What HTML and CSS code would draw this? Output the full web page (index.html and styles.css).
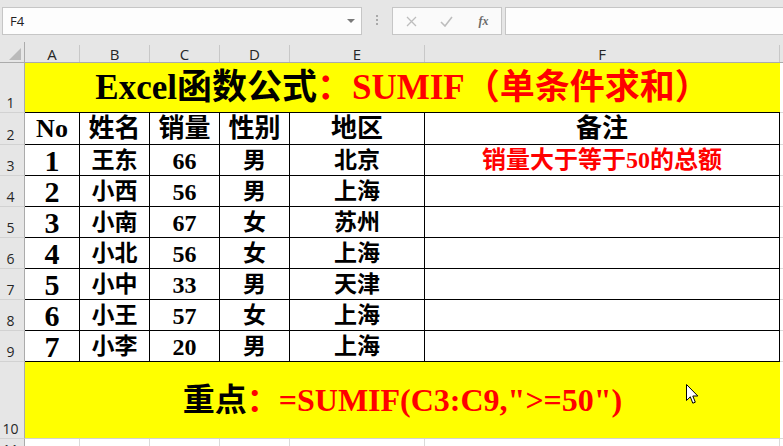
FILE: index.html
```html
<!DOCTYPE html>
<html lang="zh-CN">
<head>
<meta charset="utf-8">
<title>SUMIF</title>
<link rel="stylesheet" href="styles.css">
</head>
<body>
<div class="app">
  <div class="fbar">
    <div class="namebox"><span class="ref">F4</span><span class="caret"></span></div>
    <div class="grip"><i></i><i></i><i></i></div>
    <div class="fxbox">
      <span class="ico"><svg width="11" height="11" viewBox="0 0 11 11"><path d="M1 1 L10 10 M10 1 L1 10" stroke="#bdbdbd" stroke-width="1.3" fill="none"/></svg></span>
      <span class="ico"><svg width="13" height="11" viewBox="0 0 13 11"><path d="M1 6 L5 10 L12 1" stroke="#bdbdbd" stroke-width="1.6" fill="none"/></svg></span>
      <span class="ico fx">fx</span>
    </div>
    <div class="finput"></div>
  </div>

  <div class="sheet">
    <div class="row hdr">
      <div class="corner"><svg width="12" height="12" viewBox="0 0 12 12"><polygon points="12,0 12,12 0,12" fill="#bababa"/></svg></div>
      <div class="ch">A</div><div class="ch">B</div><div class="ch">C</div><div class="ch">D</div><div class="ch">E</div><div class="ch">F</div><div class="ch last"></div>
    </div>

    <div class="row r1">
      <div class="rh">1</div>
      <div class="merged title"><span class="blk">Excel函数公式</span><span class="red">：SUMIF（单条件求和）</span></div>
      <div class="gx"></div>
    </div>

    <div class="row r2">
      <div class="rh">2</div>
      <div class="c hd">No</div><div class="c hd">姓名</div><div class="c hd">销量</div><div class="c hd">性别</div><div class="c hd">地区</div><div class="c hd">备注</div>
      <div class="gx"></div>
    </div>

    <div class="row rd">
      <div class="rh">3</div>
      <div class="c no">1</div><div class="c nm">王东</div><div class="c num">66</div><div class="c nm">男</div><div class="c nm">北京</div><div class="c note">销量大于等于50的总额</div>
      <div class="gx"></div>
    </div>
    <div class="row rd">
      <div class="rh">4</div>
      <div class="c no">2</div><div class="c nm">小西</div><div class="c num">56</div><div class="c nm">男</div><div class="c nm">上海</div><div class="c"></div>
      <div class="gx"></div>
    </div>
    <div class="row rd">
      <div class="rh">5</div>
      <div class="c no">3</div><div class="c nm">小南</div><div class="c num">67</div><div class="c nm">女</div><div class="c nm">苏州</div><div class="c"></div>
      <div class="gx"></div>
    </div>
    <div class="row rd">
      <div class="rh">6</div>
      <div class="c no">4</div><div class="c nm">小北</div><div class="c num">56</div><div class="c nm">女</div><div class="c nm">上海</div><div class="c"></div>
      <div class="gx"></div>
    </div>
    <div class="row rd">
      <div class="rh">7</div>
      <div class="c no">5</div><div class="c nm">小中</div><div class="c num">33</div><div class="c nm">男</div><div class="c nm">天津</div><div class="c"></div>
      <div class="gx"></div>
    </div>
    <div class="row rd">
      <div class="rh">8</div>
      <div class="c no">6</div><div class="c nm">小王</div><div class="c num">57</div><div class="c nm">女</div><div class="c nm">上海</div><div class="c"></div>
      <div class="gx"></div>
    </div>
    <div class="row rd">
      <div class="rh">9</div>
      <div class="c no">7</div><div class="c nm">小李</div><div class="c num">20</div><div class="c nm">男</div><div class="c nm">上海</div><div class="c"></div>
      <div class="gx"></div>
    </div>

    <div class="row r10">
      <div class="rh">10</div>
      <div class="merged key"><span class="blk">重点</span><span class="red">：=SUMIF(C3:C9,"&gt;=50")</span></div>
      <div class="gx"></div>
    </div>

    <div class="row r11">
      <div class="rh rh11">11</div>
      <div class="e"></div><div class="e"></div><div class="e"></div><div class="e"></div><div class="e"></div><div class="e"></div><div class="gx"></div>
    </div>

    <svg class="cursor" width="13" height="21" viewBox="0 0 13 21"><path d="M0.5 0.5 L0.5 16.5 L4.3 12.8 L6.8 19.2 L9.3 18.2 L6.8 12 L11.8 12 Z" fill="#fff" stroke="#000" stroke-width="1"/></svg>
  </div>
</div>
</body>
</html>
```

FILE: styles.css
```css
html, body {
  margin: 0;
  padding: 0;
  background: #ffffff;
}
body {
  width: 783px;
  height: 446px;
  overflow: hidden;
  font-family: "Liberation Serif", "Noto Sans CJK SC", serif;
}
.app {
  width: 783px;
  height: 446px;
  overflow: hidden;
}

/* formula bar */
.fbar {
  height: 42px;
  box-sizing: border-box;
  background: #e6e6e6;
  display: flex;
  align-items: flex-start;
  padding: 7px 0 0 2px;
}
.namebox {
  width: 360px;
  height: 28px;
  box-sizing: border-box;
  border: 1px solid #c6c6c6;
  background: #fdfdfd;
  display: flex;
  align-items: center;
  justify-content: space-between;
  padding: 0 6px 0 7px;
}
.ref {
  font-family: "Open Sans", "Noto Sans", sans-serif;
  font-size: 13px;
  color: #222;
}
.caret {
  width: 0;
  height: 0;
  border-left: 4px solid transparent;
  border-right: 4px solid transparent;
  border-top: 4px solid #7a7a7a;
}
.grip {
  width: 30px;
  display: flex;
  flex-direction: column;
  align-items: center;
  gap: 2px;
  padding-top: 8px;
}
.grip i {
  display: block;
  width: 2px;
  height: 2px;
  background: #a9a9a9;
}
.fxbox {
  width: 110px;
  height: 28px;
  box-sizing: border-box;
  border: 1px solid #c6c6c6;
  background: #fafafa;
  display: flex;
  align-items: center;
  padding-left: 1px;
}
.ico {
  width: 36px;
  display: flex;
  justify-content: center;
  align-items: center;
}
.fx {
  font-family: "Liberation Serif", serif;
  font-style: italic;
  font-weight: bold;
  font-size: 12px;
  color: #6a6a6a;
  padding-left: 2px;
}
.finput {
  flex: 1;
  height: 28px;
  box-sizing: border-box;
  border: 1px solid #c6c6c6;
  background: #fdfdfd;
  margin-left: 3px;
  margin-right: -4px;
}

/* sheet */
.sheet {
  position: relative;
}
.row {
  display: grid;
  grid-template-columns: 25px 55px 70px 70px 70px 135px 355px 1fr;
  grid-template-rows: minmax(0, 1fr);
  overflow: hidden;
}
.row > div {
  min-height: 0;
  box-sizing: border-box;
  overflow: hidden;
}
.hdr {
  height: 21px;
  box-sizing: border-box;
  background: #e6e6e6;
  border-bottom: 1px solid #ababab;
}
.hdr > div {
  overflow: visible;
}
.corner {
  border-right: 1px solid #ababab;
  display: flex;
  align-items: flex-end;
  justify-content: flex-end;
  padding: 0 3px 2px 0;
}
.ch {
  margin-top: 3px;
  border-right: 1px solid #c8c8c8;
  font-family: "Open Sans", "Noto Sans", sans-serif;
  font-size: 15px;
  line-height: 16px;
  color: #262626;
  text-align: center;
  padding-top: 1px;
}
.ch.last {
  border-right: none;
}

.rh {
  background: #e6e6e6;
  border-right: 1px solid #ababab;
  border-bottom: 1px solid #d2d2d2;
  font-family: "Open Sans", "Noto Sans", sans-serif;
  font-size: 14px;
  line-height: 16px;
  color: #262626;
  display: flex;
  align-items: flex-end;
  justify-content: center;
  padding-right: 3px;
  padding-bottom: 1px;
}
.rh11 {
  align-items: flex-start;
  padding-top: 3px;
  padding-bottom: 0;
}
.gx {
  background: #ffffff;
  border-bottom: 1px solid #dadada;
}

.r1 { height: 50px; }
.r2 { height: 32px; }
.rd { height: 31px; }
.r10 { height: 77px; }
.r11 { height: 20px; }

.merged {
  grid-column: span 6;
  background: #ffff00;
  display: flex;
  align-items: center;
  justify-content: center;
  font-weight: bold;
  white-space: nowrap;
  line-height: 1;
}
.title {
  font-size: 35px;
  border-bottom: 1px solid #000;
}
.key {
  font-size: 32px;
  border-bottom: 1px solid #d2d2d2;
}
.blk { color: #000; }
.red { color: #ff0000; }

.c {
  border-right: 1px solid #000;
  border-bottom: 1px solid #000;
  background: #ffffff;
  display: flex;
  align-items: center;
  justify-content: center;
  font-weight: bold;
  color: #000;
  white-space: nowrap;
  line-height: 1;
}
.hd { font-size: 26px; padding-top: 1px; }
.no { font-size: 30px; padding-top: 1px; }
.nm { font-size: 23px; }
.num { font-size: 24px; padding-top: 1px; }
.note {
  font-size: 24px;
  color: #ff0000;
}
.e {
  border-right: 1px solid #dadada;
  background: #fff;
}

.cursor {
  position: absolute;
  left: 686px;
  top: 342px;
}
```
